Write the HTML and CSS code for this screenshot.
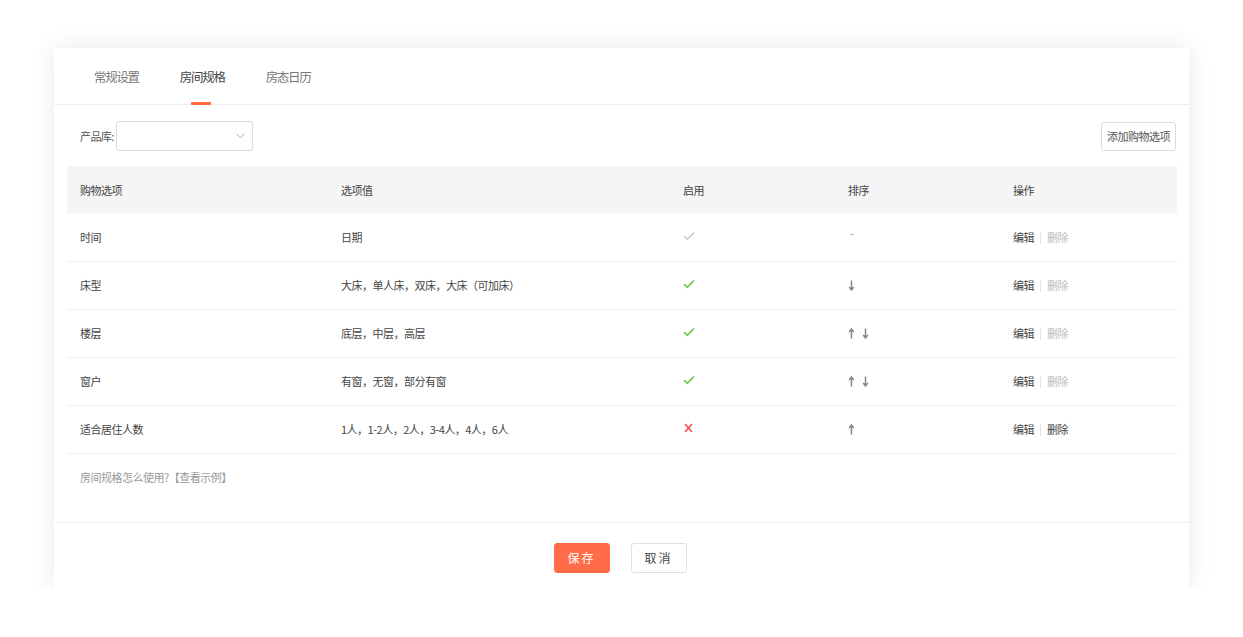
FILE: index.html
```html
<!DOCTYPE html>
<html lang="zh">
<head>
<meta charset="utf-8">
<title>房间规格</title>
<link rel="stylesheet" href="styles.css">
</head>
<body>
<div class="page">
  <div class="card">
    <div class="tabs">
      <div class="tab">常规设置</div>
      <div class="tab active">房间规格</div>
      <div class="tab">房态日历</div>
    </div>
    <div class="content">
      <div class="toolbar">
        <div class="filter">
          <span class="label">产品库:</span>
          <div class="select">
            <svg class="chev" width="9" height="6" viewBox="0 0 9 6"><path d="M0.5 0.8 L4.5 4.8 L8.5 0.8" fill="none" stroke="#aaa" stroke-width="1"/></svg>
          </div>
        </div>
        <button class="btn-add">添加购物选项</button>
      </div>
      <table class="grid">
        <colgroup>
          <col class="c1"><col class="c2"><col class="c3"><col class="c4"><col class="c5">
        </colgroup>
        <thead>
          <tr><th>购物选项</th><th>选项值</th><th>启用</th><th>排序</th><th>操作</th></tr>
        </thead>
        <tbody>
          <tr>
            <td>时间</td><td>日期</td>
            <td><svg class="ico" width="12" height="10" viewBox="0 0 12 10"><path d="M1 5 L4.3 8.3 L11 1.5" fill="none" stroke="#c8c8c8" stroke-width="1.4"/></svg></td>
            <td><span class="dash">-</span></td>
            <td><span class="act">编辑</span><span class="sep"></span><span class="act off">删除</span></td>
          </tr>
          <tr>
            <td>床型</td><td>大床，单人床，双床，大床（可加床）</td>
            <td><svg class="ico" width="12" height="10" viewBox="0 0 12 10"><path d="M1 5 L4.3 8.3 L11 1.5" fill="none" stroke="#6cc644" stroke-width="1.6"/></svg></td>
            <td><span class="arrows"><svg width="7" height="11" viewBox="0 0 7 11"><path d="M3.5 0.5 V9.5 M1.2 7 L3.5 10 L5.8 7" fill="none" stroke="#888" stroke-width="1.5"/></svg></span></td>
            <td><span class="act">编辑</span><span class="sep"></span><span class="act off">删除</span></td>
          </tr>
          <tr>
            <td>楼层</td><td>底层，中层，高层</td>
            <td><svg class="ico" width="12" height="10" viewBox="0 0 12 10"><path d="M1 5 L4.3 8.3 L11 1.5" fill="none" stroke="#6cc644" stroke-width="1.6"/></svg></td>
            <td><span class="arrows"><svg width="7" height="11" viewBox="0 0 7 11"><path d="M3.5 10.5 V1.5 M1.2 4 L3.5 1 L5.8 4" fill="none" stroke="#888" stroke-width="1.5"/></svg><svg width="7" height="11" viewBox="0 0 7 11"><path d="M3.5 0.5 V9.5 M1.2 7 L3.5 10 L5.8 7" fill="none" stroke="#888" stroke-width="1.5"/></svg></span></td>
            <td><span class="act">编辑</span><span class="sep"></span><span class="act off">删除</span></td>
          </tr>
          <tr>
            <td>窗户</td><td>有窗，无窗，部分有窗</td>
            <td><svg class="ico" width="12" height="10" viewBox="0 0 12 10"><path d="M1 5 L4.3 8.3 L11 1.5" fill="none" stroke="#6cc644" stroke-width="1.6"/></svg></td>
            <td><span class="arrows"><svg width="7" height="11" viewBox="0 0 7 11"><path d="M3.5 10.5 V1.5 M1.2 4 L3.5 1 L5.8 4" fill="none" stroke="#888" stroke-width="1.5"/></svg><svg width="7" height="11" viewBox="0 0 7 11"><path d="M3.5 0.5 V9.5 M1.2 7 L3.5 10 L5.8 7" fill="none" stroke="#888" stroke-width="1.5"/></svg></span></td>
            <td><span class="act">编辑</span><span class="sep"></span><span class="act off">删除</span></td>
          </tr>
          <tr>
            <td>适合居住人数</td><td>1人，1-2人，2人，3-4人，4人，6人</td>
            <td><svg class="ico" width="12" height="10" viewBox="0 0 12 10"><path d="M2 1 L9 9 M9 1 L2 9" fill="none" stroke="#f4474b" stroke-width="1.5"/></svg></td>
            <td><span class="arrows"><svg width="7" height="11" viewBox="0 0 7 11"><path d="M3.5 10.5 V1.5 M1.2 4 L3.5 1 L5.8 4" fill="none" stroke="#888" stroke-width="1.5"/></svg></span></td>
            <td><span class="act">编辑</span><span class="sep"></span><span class="act">删除</span></td>
          </tr>
        </tbody>
      </table>
      <div class="hint">房间规格怎么使用?【查看示例】</div>
    </div>
    <div class="footer">
      <button class="btn-save">保存</button>
      <button class="btn-cancel">取消</button>
    </div>
  </div>
</div>
</body>
</html>
```

FILE: styles.css
```css
* { box-sizing: border-box; }
html, body { margin: 0; padding: 0; background: #fff; }
body {
  font-family: "Noto Sans CJK SC", "Noto Sans", sans-serif;
  color: #444;
  font-size: 11px;
}
.page { padding: 48px 54px 0 54px; }
.card {
  width: 1135px;
  height: 540px;
  background: #fff;
  box-shadow: 0 0 24px rgba(0,0,0,0.09);
  display: flex;
  flex-direction: column;
}
.tabs {
  height: 57px;
  border-bottom: 1px solid #eeeeee;
  display: flex;
  padding-left: 40px;
  gap: 41px;
}
.tab {
  font-size: 12.5px;
  letter-spacing: -1.3px;
  color: #777;
  line-height: 58px;
  position: relative;
}
.tab.active { color: #444; }
.tab.active::after {
  content: "";
  position: absolute;
  left: 50%;
  bottom: -1px;
  width: 20px;
  margin-left: -11px;
  height: 3px;
  background: #ff6a3d;
  border-radius: 1px;
}
.content {
  padding: 16px 12px 0 13px;
  flex: 1;
}
.toolbar {
  display: flex;
  justify-content: space-between;
  align-items: center;
  height: 30px;
}
.filter { display: flex; align-items: center; padding-left: 13px; }
.label { color: #555; letter-spacing: -0.6px; margin-right: 2px; }
.select {
  width: 137px;
  height: 30px;
  border: 1px solid #dcdcdc;
  border-radius: 3px;
  display: flex;
  align-items: center;
  justify-content: flex-end;
  padding-right: 7px;
}
.btn-add {
  font-family: inherit;
  font-size: 11px;
  letter-spacing: -0.5px;
  color: #555;
  background: #fff;
  border: 1px solid #dcdcdc;
  border-radius: 3px;
  height: 29px;
  width: 75px;
  padding: 0;
  margin-right: 1px;
}
.grid {
  margin-top: 15px;
  width: 1110px;
  border-collapse: collapse;
  table-layout: fixed;
}
.c1 { width: 261px; }
.c2 { width: 342px; }
.c3 { width: 165px; }
.c4 { width: 165px; }
.c5 { width: 177px; }
.grid th {
  background: #f5f5f5;
  height: 47px;
  text-align: left;
  font-weight: normal;
  color: #444;
  padding: 0 0 0 13px;
  letter-spacing: -0.5px;
}
.grid td {
  height: 48px;
  border-bottom: 1px solid #efefef;
  padding: 0 0 0 13px;
  color: #444;
  letter-spacing: -0.5px;
  vertical-align: middle;
}
.ico { display: block; margin-top: -2px; }
.dash { color: #999; display: inline-block; margin-left: 2px; margin-top: -4px; vertical-align: top; }
.arrows { display: inline-flex; gap: 7px; margin-top: -3px; vertical-align: middle; }
.arrows svg { display: block; }
.act { color: #444; }
.act.off { color: #bbb; }
.sep {
  display: inline-block;
  width: 1px;
  height: 12px;
  background: #e2e2e2;
  margin: 0 6px;
  vertical-align: -2px;
}
.hint {
  color: #999;
  padding: 15px 0 0 13px;
  letter-spacing: -0.5px;
}
.footer {
  height: 66px;
  border-top: 1px solid #eeeeee;
  display: flex;
  justify-content: center;
  align-items: center;
  gap: 21px;
  padding-right: 3px;
  padding-top: 4px;
}
.footer button {
  font-family: inherit;
  font-size: 12px;
  letter-spacing: 2px;
  height: 30px;
  width: 56px;
  border-radius: 3px;
  padding: 0;
}
.btn-save { background: #ff6c47; color: #fff; border: 1px solid #ff6c47; }
.btn-cancel { background: #fff; color: #444; border: 1px solid #e0e0e0; }
```
